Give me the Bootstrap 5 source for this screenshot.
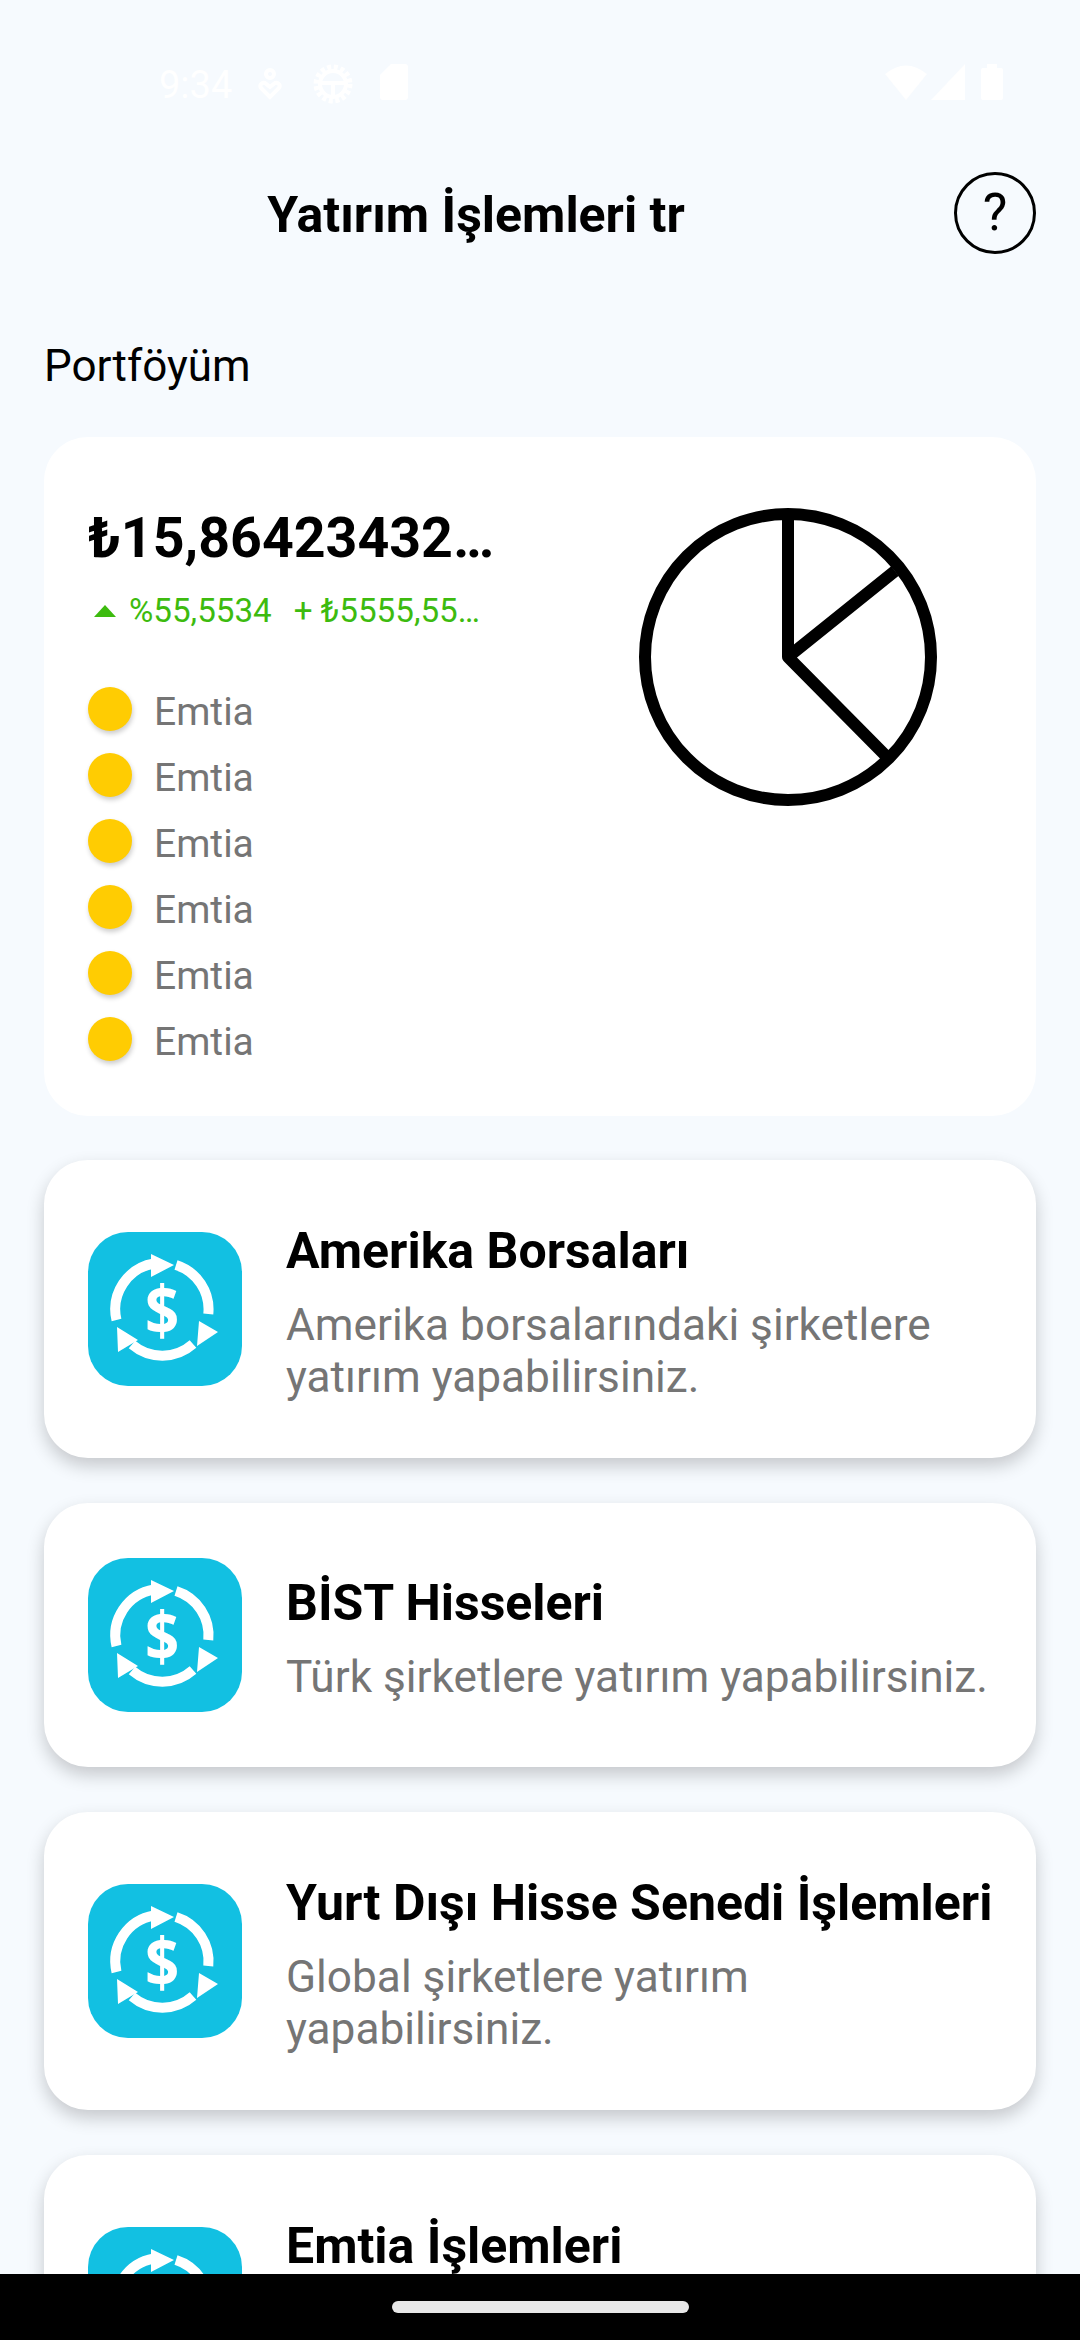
<!DOCTYPE html>
<html lang="tr">
<head>
    <meta charset="UTF-8">
    <meta name="viewport" content="width=device-width, initial-scale=1.0">
    <title>Yatırım İşlemleri</title>
    <link href="https://cdn.jsdelivr.net/npm/bootstrap@5.3.0/dist/css/bootstrap.min.css" rel="stylesheet">
    <style>
        html, body { height: 2340px; overflow: hidden; }
        body { background: #f6fafe; font-family: Roboto, sans-serif; color: #000; }
        .status-row { height: 128px; padding: 64px 77px 0 159px; color: #fff; }
        .status-time { font-size: 38px; line-height: 42px; width: 99px; }
        .top-head { height: 82px; margin-top: 44px; padding: 0 44px; gap: 46px; }
        .top-title { font-size: 50px; font-weight: 700; line-height: 82px; padding-top: 3px; }
        .help-ring { width: 82px; height: 82px; border: 3px solid #000; border-radius: 50%; font-size: 52px; line-height: 1; flex: none; }
        .section-name { font-size: 44px; line-height: 56px; margin: 84px 44px 43px; }
        .portfolio-box { margin: 0 44px 44px; height: 679px; border-radius: 44px; padding: 64px 98px 0 44px; }
        .total-amount { font-size: 55.5px; font-weight: 700; line-height: 76px; }
        .change-row { font-size: 33.2px; line-height: 44px; color: #3dbb0f; margin-top: 12px; margin-bottom: 46px; }
        .up-mark { width: 0; height: 0; border-left: 11px solid transparent; border-right: 11px solid transparent; border-bottom: 12px solid #3dbb0f; margin: 0 13px 0 6px; }
        .change-gap { margin-right: 22px; }
        .legend-line { height: 66px; font-size: 39px; color: #757575; }
        .legend-dot { width: 44px; height: 44px; border-radius: 50%; background: #ffcc02; box-shadow: 1px 3px 5px rgba(0,0,0,.2); margin-right: 22px; margin-bottom: 6px; }
        .pie-holder { margin-top: 6px; }
        .menu-box { margin: 0 44px 45px; border-radius: 44px; padding: 55px 30px 55px 44px; box-shadow: 0 8px 18px rgba(0,0,0,.2); }
        .menu-pic { width: 154px; height: 154px; border-radius: 40px; background: #12c0e2; flex: none; margin-right: 44px; }
        .menu-text { padding: 6px 0 0; }
        .menu-title { font-size: 50px; font-weight: 700; line-height: 60px; margin-bottom: 18px; }
        .menu-desc { font-size: 44.2px; line-height: 52px; color: #757575; }
        .dollar-mark { font-family: "Open Sans", sans-serif; font-size: 68px; font-weight: 700; fill: #fff; }
        .nav-strip { position: fixed; left: 0; right: 0; bottom: 0; height: 66px; background: #000; }
        .nav-pill { width: 297px; height: 12px; border-radius: 6px; background: #e8e8e8; margin-top: 27px; }
        .status-gear { margin-left: 31px; }
        .status-card { margin-left: 27px; }
    </style>
</head>
<body>
    <svg width="0" height="0" class="d-block">
        <symbol id="swapIcon" viewBox="0 0 154 154">
            <g fill="none" stroke="#fff" stroke-width="10">
                <path d="M28.5 88A46.5 46.5 0 0 1 66 31.5"/>
                <path d="M88 33A46.5 46.5 0 0 1 120.3 82"/>
                <path d="M105 112A46.5 46.5 0 0 1 44 112.5"/>
            </g>
            <path fill="#fff" d="M63 22 86 33 63 45ZM111 89 130 100 109 114ZM30 120 29 95 50 108Z"/>
        </symbol>
    </svg>

    <!-- Status bar -->
    <div class="status-row d-flex align-items-start">
        <div class="status-time">9:34</div>
        <svg width="24" height="32" viewBox="0 0 24 32" class="mt-1"><g fill="none" stroke="#fff" stroke-width="4"><circle cx="12" cy="6" r="4"/><path d="M12 29 3 20c-2-3 1-6 4-5l5 4 5-4c3-1 6 2 4 5z"/></g></svg>
        <svg width="40" height="40" viewBox="0 0 40 40" class="status-gear"><circle cx="20" cy="20" r="13" fill="none" stroke="#fff" stroke-width="4"/><circle cx="20" cy="20" r="17" fill="none" stroke="#fff" stroke-width="5" stroke-dasharray="4 2.7"/><path d="M7 19h26M20 19v14" stroke="#fff" stroke-width="4"/></svg>
        <svg width="28" height="36" viewBox="0 0 28 36" class="status-card"><path fill="#fff" d="M11 0h14a3 3 0 0 1 3 3v30a3 3 0 0 1-3 3H3a3 3 0 0 1-3-3V11z"/></svg>
        <div class="flex-grow-1"></div>
        <svg width="42" height="36" viewBox="0 0 42 36"><path fill="#fff" d="M0 10Q21-7 42 10L21 36z"/></svg>
        <svg width="34" height="36" viewBox="0 0 34 36" class="ms-1"><path fill="#fff" d="M34 0v36H0z"/></svg>
        <svg width="22" height="36" viewBox="0 0 22 36" class="ms-3"><path fill="#fff" d="M6 0h10v4h4a2 2 0 0 1 2 2v28a2 2 0 0 1-2 2H2a2 2 0 0 1-2-2V6a2 2 0 0 1 2-2h4z"/></svg>
    </div>

    <!-- Header -->
    <div class="top-head d-flex align-items-center">
        <div class="top-title flex-grow-1 text-center">Yatırım İşlemleri tr</div>
        <div class="help-ring d-flex align-items-center justify-content-center">?</div>
    </div>

    <div class="section-name">Portföyüm</div>

    <!-- Portfolio summary -->
    <div class="card border-0 portfolio-box d-flex flex-row justify-content-between">
        <div>
            <div class="total-amount">₺15,86423432…</div>
            <div class="change-row d-flex align-items-center">
                <span class="up-mark"></span>
                <span class="change-gap">%55,5534</span>
                <span>+ ₺5555,55…</span>
            </div>
            <div class="legend-line d-flex align-items-center"><span class="legend-dot"></span>Emtia</div>
            <div class="legend-line d-flex align-items-center"><span class="legend-dot"></span>Emtia</div>
            <div class="legend-line d-flex align-items-center"><span class="legend-dot"></span>Emtia</div>
            <div class="legend-line d-flex align-items-center"><span class="legend-dot"></span>Emtia</div>
            <div class="legend-line d-flex align-items-center"><span class="legend-dot"></span>Emtia</div>
            <div class="legend-line d-flex align-items-center"><span class="legend-dot"></span>Emtia</div>
        </div>
        <div class="pie-holder">
            <svg width="300" height="300" viewBox="0 0 300 300" fill="none" stroke="#000" stroke-width="12" stroke-linejoin="round">
                <circle cx="150" cy="150" r="143"/>
                <path d="M257 64 150 150V7M150 150 247 248"/>
            </svg>
        </div>
    </div>

    <!-- Menu cards -->
    <div class="card border-0 menu-box d-flex flex-row align-items-center">
        <svg class="menu-pic" viewBox="0 0 154 154"><use href="#swapIcon"/><text class="dollar-mark" transform="translate(74 103) scale(.88 1)" text-anchor="middle">$</text></svg>
        <div class="menu-text">
            <div class="menu-title">Amerika Borsaları</div>
            <div class="menu-desc">Amerika borsalarındaki şirketlere yatırım yapabilirsiniz.</div>
        </div>
    </div>
    <div class="card border-0 menu-box d-flex flex-row align-items-center">
        <svg class="menu-pic" viewBox="0 0 154 154"><use href="#swapIcon"/><text class="dollar-mark" transform="translate(74 103) scale(.88 1)" text-anchor="middle">$</text></svg>
        <div class="menu-text">
            <div class="menu-title">BİST Hisseleri</div>
            <div class="menu-desc">Türk şirketlere yatırım yapabilirsiniz.</div>
        </div>
    </div>
    <div class="card border-0 menu-box d-flex flex-row align-items-center">
        <svg class="menu-pic" viewBox="0 0 154 154"><use href="#swapIcon"/><text class="dollar-mark" transform="translate(74 103) scale(.88 1)" text-anchor="middle">$</text></svg>
        <div class="menu-text">
            <div class="menu-title">Yurt Dışı Hisse Senedi İşlemleri</div>
            <div class="menu-desc">Global şirketlere yatırım<br>yapabilirsiniz.</div>
        </div>
    </div>
    <div class="card border-0 menu-box d-flex flex-row align-items-center">
        <svg class="menu-pic" viewBox="0 0 154 154"><use href="#swapIcon"/><text class="dollar-mark" transform="translate(74 103) scale(.88 1)" text-anchor="middle">$</text></svg>
        <div class="menu-text">
            <div class="menu-title">Emtia İşlemleri</div>
            <div class="menu-desc">Emtia piyasalarına yatırım<br>yapabilirsiniz.</div>
        </div>
    </div>

    <!-- Android gesture bar -->
    <div class="nav-strip d-flex justify-content-center">
        <div class="nav-pill"></div>
    </div>

    <script src="https://cdn.jsdelivr.net/npm/bootstrap@5.3.0/dist/js/bootstrap.bundle.min.js"></script>
</body>
</html>
